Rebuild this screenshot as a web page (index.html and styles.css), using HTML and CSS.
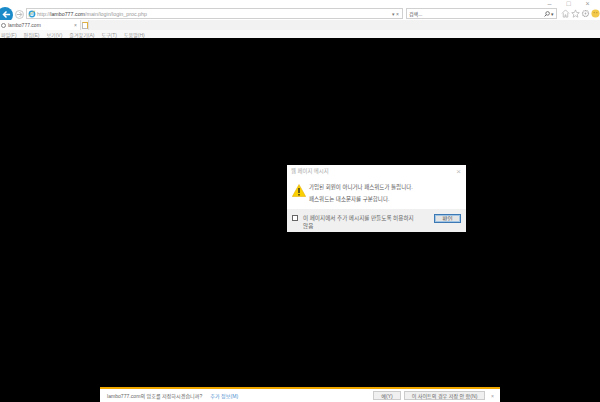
FILE: index.html
```html
<!DOCTYPE html>
<html lang="ko">
<head>
  <meta charset="UTF-8" />
  <title>lambo777.com</title>
  <link rel="stylesheet" href="styles.css">
</head>
<body>
  <div class="chrome">
    <div class="caption">
      <span class="cap-btn">&#8211;</span>
      <span class="cap-btn">&#9633;</span>
      <span class="cap-btn">&#215;</span>
    </div>
    <div class="navbar">
      <div class="back">
        <svg width="9" height="9" viewBox="0 0 10 10"><path d="M9 5H2M5 1.600 1.600 5 5 8.400" fill="none" stroke="#fff" stroke-width="1.600"/></svg>
      </div>
      <div class="forward">
        <svg width="7" height="7" viewBox="0 0 10 10"><path d="M1 5h7M5 1.600 8.400 5 5 8.400" fill="none" stroke="#b5b5b5" stroke-width="1.300"/></svg>
      </div>
      <div class="address">
        <svg class="ie-logo" width="8" height="8" viewBox="0 0 10 10"><circle cx="5" cy="5" r="3.400" fill="none" stroke="#2f9fd8" stroke-width="1.700"/><path d="M2 5h6" stroke="#2f9fd8" stroke-width="1"/><path d="M1 8c2-4 5-6 8-7" fill="none" stroke="#e8b93c" stroke-width=".8"/></svg>
        <span class="url"><span class="url-dim">http://</span><span class="url-host">lambo777.com</span><span class="url-dim">/main/login/login_proc.php</span></span>
        <span class="addr-tools">&#9662; &#215;</span>
      </div>
      <div class="search">
        <span class="search-text">검색...</span>
        <span class="search-tools">
          <svg width="6" height="6" viewBox="0 0 10 10"><circle cx="6" cy="4" r="3" fill="none" stroke="#666" stroke-width="1.400"/><path d="M4 6 1 9" stroke="#666" stroke-width="1.600"/></svg>
          &#9662;
        </span>
      </div>
      <div class="tools">
        <svg width="9" height="9" viewBox="0 0 10 10"><path d="M1 5 5 1l4 4M2.500 4.500V9h2V6.500h1V9h2V4.500" fill="none" stroke="#b0b0b0" stroke-width=".8"/></svg>
        <svg width="9" height="9" viewBox="0 0 10 10"><path d="M5 1l1.200 2.800 3 .3-2.300 2 .7 3L5 7.500 2.400 9.100l.7-3-2.300-2 3-.3z" fill="none" stroke="#b0b0b0" stroke-width=".8"/></svg>
        <svg width="9" height="9" viewBox="0 0 10 10"><circle cx="5" cy="5" r="3.300" fill="none" stroke="#b0b0b0" stroke-width="1.400" stroke-dasharray="1.300 .5"/><circle cx="5" cy="5" r="1" fill="#b0b0b0"/></svg>
        <svg width="9" height="9" viewBox="0 0 10 10"><circle cx="5" cy="5" r="4.500" fill="#f2c94a"/><circle cx="3.500" cy="4" r=".6" fill="#a8862a"/><circle cx="6.500" cy="4" r=".6" fill="#a8862a"/></svg>
      </div>
    </div>
    <div class="tabbar">
      <div class="tab">
        <span class="tab-ring"></span>
        <span class="tab-title">lambo777.com</span>
        <span class="tab-close">&#215;</span>
      </div>
      <div class="newtab"><span class="newtab-icon"></span></div>
    </div>
    <div class="menubar">
      <span>파일(F)</span>
      <span>편집(E)</span>
      <span>보기(V)</span>
      <span>즐겨찾기(A)</span>
      <span>도구(T)</span>
      <span>도움말(H)</span>
    </div>
  </div>

  <div class="viewport">
    <div class="dialog">
      <div class="dialog-title">
        <span>웹 페이지 메시지</span>
        <span class="dialog-close">&#215;</span>
      </div>
      <div class="dialog-body">
        <svg class="warn" width="14" height="13" viewBox="0 0 14 13"><path d="M7 .5 13.700 12.500H.3z" fill="#fbd000" stroke="#e0a800" stroke-width=".5"/><path d="M7 4v5M7 10v1.500" stroke="#222" stroke-width="1.300"/></svg>
        <div class="dialog-text">
          <p>가입된 회원이 아니거나 패스워드가 틀립니다.</p>
          <p>패스워드는 대소문자를 구분합니다.</p>
        </div>
      </div>
      <div class="dialog-foot">
        <span class="check"></span>
        <span class="check-label">이 페이지에서 추가 메시지를 만들도록 허용하지 않음</span>
        <button class="ok">확인</button>
      </div>
    </div>

    <div class="notify">
      <span class="notify-text">lambo777.com의 암호를 저장하시겠습니까?</span>
      <span class="notify-link">추가 정보(M)</span>
      <button class="notify-btn yes">예(Y)</button>
      <button class="notify-btn never">이 사이트의 경우 저장 안 함(N)</button>
      <span class="notify-close">&#215;</span>
    </div>
  </div>
</body>
</html>
```

FILE: styles.css
```css
html, body {
  margin: 0;
  height: 100%;
  overflow: hidden;
}
body {
  display: flex;
  flex-direction: column;
  height: 402px;
  font-family: "Liberation Sans", "Noto Sans CJK KR", sans-serif;
  font-size: 5px;
  color: #555;
  background: #000;
}

.chrome {
  height: 38px;
  flex: none;
  background: #fff;
  display: flex;
  flex-direction: column;
}
.caption {
  height: 8px;
  padding-right: 3px;
  display: flex;
  justify-content: flex-end;
  font-size: 7px;
  line-height: 7px;
  color: #999;
}
.cap-btn {
  width: 19px;
  text-align: center;
}

.navbar {
  height: 11px;
  display: flex;
  align-items: center;
}
.back {
  width: 16px;
  height: 16px;
  margin: 2px 0 0 -3px;
  border-radius: 50%;
  background: #1a8ac9;
  flex: none;
  display: flex;
  align-items: center;
  justify-content: center;
  padding-left: 2px;
  box-sizing: border-box;
}
.forward {
  width: 9px;
  height: 9px;
  margin: 2px 2px 0 2px;
  border: 1px solid #c8c8c8;
  border-radius: 50%;
  background: #fff;
  flex: none;
  display: flex;
  align-items: center;
  justify-content: center;
  box-sizing: border-box;
}
.address {
  width: 377px;
  height: 11px;
  padding: 0 3px 0 1px;
  border: 1px solid #d0d0d0;
  display: flex;
  align-items: center;
  gap: 1px;
  box-sizing: border-box;
  flex: none;
}
.url {
  flex: 1;
  font-size: 5.300px;
  white-space: nowrap;
}
.url-dim {
  color: #999;
}
.url-host {
  color: #444;
}
.addr-tools {
  color: #777;
  font-size: 5px;
}
.search {
  width: 151px;
  height: 11px;
  margin-left: 3px;
  padding: 0 2px 0 2px;
  border: 1px solid #d0d0d0;
  box-sizing: border-box;
  display: flex;
  align-items: center;
  justify-content: space-between;
  color: #555;
  flex: none;
}
.search-tools {
  display: flex;
  align-items: center;
  gap: 1px;
}
.tools {
  display: flex;
  align-items: center;
  gap: 1px;
  margin-left: 4px;
}

.tabbar {
  height: 10px;
  flex: none;
  display: flex;
  background: #f2f2f2;
  margin-top: 1px;
}
.tab {
  width: 80px;
  background: #fff;
  display: flex;
  align-items: center;
  gap: 2px;
  padding-left: 1px;
  box-sizing: border-box;
  color: #555;
  font-size: 5px;
}
.tab-ring {
  width: 3px;
  height: 3px;
  border: 1px solid #888;
  border-radius: 50%;
}
.tab-title {
  flex: 1;
}
.tab-close {
  color: #888;
  margin-right: 3px;
}
.newtab {
  width: 9px;
  background: #f8f8f8;
  display: flex;
  align-items: center;
  justify-content: center;
  border-left: 1px solid #ddd;
  border-right: 1px solid #ddd;
  box-sizing: border-box;
}
.newtab-icon {
  width: 4px;
  height: 5px;
  background: #fff;
  border: 1px solid #bbb;
  border-top-color: #e0b040;
  border-right-color: #e0b040;
}

.menubar {
  flex: 1;
  display: flex;
  align-items: center;
  gap: 7px;
  padding-left: 1px;
  background: #f8f8f8;
  color: #999;
  font-size: 5px;
}

.viewport {
  flex: 1;
  display: flex;
  flex-direction: column;
  background: #000;
  padding-top: 127px;
}

.dialog {
  width: 179px;
  height: 67px;
  margin-left: 287px;
  background: #fff;
  display: flex;
  flex-direction: column;
  flex: none;
}
.dialog-title {
  height: 12px;
  display: flex;
  justify-content: space-between;
  align-items: center;
  padding: 0 5px 0 4px;
  color: #aaa;
  font-size: 5.400px;
}
.dialog-close {
  font-size: 8px;
  color: #bbb;
}
.dialog-body {
  flex: 1;
  display: flex;
  padding: 6px 0 0 5px;
  gap: 3px;
}
.warn {
  margin-top: 1px;
}
.dialog-text {
  color: #555;
  font-size: 5.500px;
}
.dialog-text p {
  margin: 0 0 4px;
  line-height: 8px;
}
.dialog-foot {
  height: 23px;
  background: #f0f0f0;
  display: flex;
  align-items: flex-start;
  padding: 5px 5px 0 5px;
  color: #666;
  font-size: 5.600px;
  box-sizing: border-box;
  flex: none;
}
.check {
  width: 6px;
  height: 6px;
  margin-top: 1px;
  border: 1px solid #666;
  background: #fff;
  flex: none;
  margin-right: 5px;
  box-sizing: border-box;
}
.check-label {
  width: 114px;
  line-height: 8px;
  flex: none;
  word-break: keep-all;
}
.ok {
  width: 27px;
  height: 9px;
  margin: 0 0 0 auto;
  padding: 0;
  border: 1px solid #3b78b4;
  outline: 1px solid #9fc4e4;
  outline-offset: -2px;
  background: #e4e4e4;
  color: #555;
  font: inherit;
}

.notify {
  width: 400px;
  height: 15px;
  margin: auto 0 0 100px;
  background: #fff;
  border-top: 2px solid #f2a900;
  box-sizing: border-box;
  display: flex;
  align-items: center;
  padding-left: 7px;
  color: #666;
  font-size: 5.100px;
  flex: none;
}
.notify-link {
  margin-left: 8px;
  color: #4a8fd0;
}
.notify-btn {
  height: 9px;
  padding: 0;
  border: 1px solid #ccc;
  background: #f0f0f0;
  color: #666;
  font: inherit;
}
.yes {
  width: 28px;
  margin-left: auto;
}
.never {
  width: 81px;
  margin-left: 3px;
}
.notify-close {
  width: 15px;
  text-align: center;
  color: #999;
}
```
